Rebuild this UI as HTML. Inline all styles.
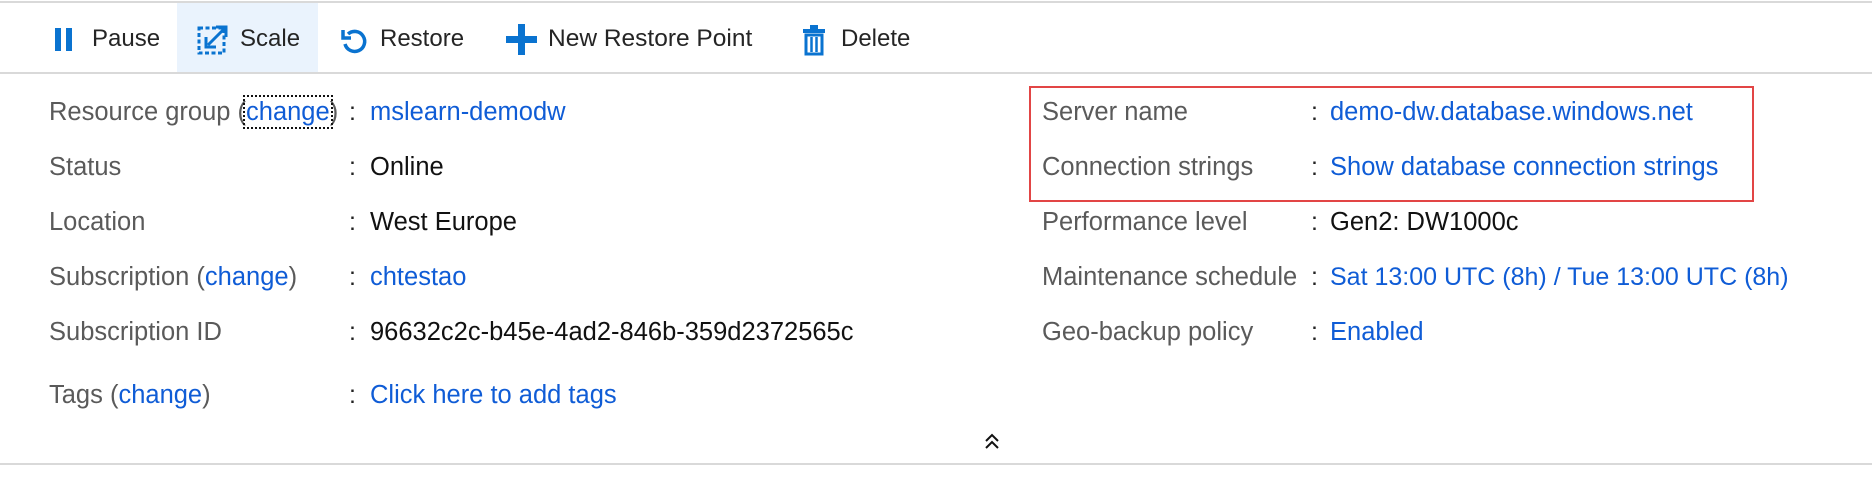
<!DOCTYPE html>
<html><head><meta charset="utf-8"><style>
body{margin:0;width:1872px;height:480px;background:#fff;font-family:"Segoe UI","Liberation Sans",sans-serif;position:relative;overflow:hidden}
.abs{position:absolute;white-space:nowrap}
.tb{font-size:24px;color:#252525;top:24px;line-height:30px}
.lbl{font-size:25.5px;color:#5a5a5a;line-height:30px}
.val{font-size:25.5px;color:#111;line-height:30px}
a{color:#0f5cd6;text-decoration:none}
.c{font-size:25px;color:#222;line-height:30px}
.foc{outline:2px dotted #111;outline-offset:1px}
</style></head><body>
<div class="abs" style="left:0;top:1px;width:1872px;height:2px;background:#d9d9d9"></div>
<div class="abs" style="left:177px;top:3px;width:141px;height:69px;background:#eaf3fd"></div>
<div class="abs" style="left:0;top:72px;width:1872px;height:2px;background:#d9d9d9"></div>

<div class="abs" style="left:55px;top:28px;width:6px;height:23px;background:#0a73d0"></div>
<div class="abs" style="left:66px;top:28px;width:6px;height:23px;background:#0a73d0"></div>
<div class="abs tb" style="left:92px">Pause</div>
<svg class="abs" style="left:196px;top:23px" width="34" height="34" viewBox="0 0 34 34"><rect x="3" y="5" width="25" height="25" fill="none" stroke="#0a73d0" stroke-width="3" stroke-dasharray="4 2.5"/><path d="M12 22 L29 5 M20 4 H30 V14" fill="none" stroke="#0a73d0" stroke-width="3"/><path d="M10 14 V24 H20" fill="none" stroke="#0a73d0" stroke-width="3"/></svg>
<div class="abs tb" style="left:240px">Scale</div>
<svg class="abs" style="left:340px;top:27px" width="28" height="28" viewBox="0 0 28 28"><path d="M8 7 A10 10 0 1 1 5 17" fill="none" stroke="#0a73d0" stroke-width="3.5"/><path d="M3 3 V11 H11" fill="none" stroke="#0a73d0" stroke-width="3.5"/></svg>
<div class="abs tb" style="left:380px">Restore</div>
<div class="abs" style="left:506px;top:36px;width:31px;height:7px;background:#0a73d0"></div>
<div class="abs" style="left:518px;top:24px;width:7px;height:31px;background:#0a73d0"></div>
<div class="abs tb" style="left:548px;font-size:24.5px">New Restore Point</div>
<svg class="abs" style="left:802px;top:24px" width="24" height="32" viewBox="0 0 24 32"><rect x="8" y="1" width="8" height="4" fill="#0a73d0"/><rect x="1" y="5" width="22" height="4" fill="#0a73d0"/><path d="M4 11 H20 V30 H4 Z" fill="none" stroke="#0a73d0" stroke-width="3"/><path d="M9.5 13 V28 M14.5 13 V28" stroke="#0a73d0" stroke-width="2.5"/></svg>
<div class="abs tb" style="left:841px">Delete</div>

<div class="abs lbl" style="left:49px;top:97px">Resource group (<a class="foc">change</a>)</div>
<div class="abs c" style="left:349px;top:97px">:</div>
<div class="abs val" style="left:370px;top:97px"><a>mslearn-demodw</a></div>

<div class="abs lbl" style="left:49px;top:152px">Status</div>
<div class="abs c" style="left:349px;top:152px">:</div>
<div class="abs val" style="left:370px;top:152px">Online</div>

<div class="abs lbl" style="left:49px;top:207px">Location</div>
<div class="abs c" style="left:349px;top:207px">:</div>
<div class="abs val" style="left:370px;top:207px">West Europe</div>

<div class="abs lbl" style="left:49px;top:262px">Subscription (<a>change</a>)</div>
<div class="abs c" style="left:349px;top:262px">:</div>
<div class="abs val" style="left:370px;top:262px"><a>chtestao</a></div>

<div class="abs lbl" style="left:49px;top:317px">Subscription ID</div>
<div class="abs c" style="left:349px;top:317px">:</div>
<div class="abs val" style="left:370px;top:317px">96632c2c-b45e-4ad2-846b-359d2372565c</div>

<div class="abs lbl" style="left:49px;top:380px">Tags (<a>change</a>)</div>
<div class="abs c" style="left:349px;top:380px">:</div>
<div class="abs val" style="left:370px;top:380px"><a>Click here to add tags</a></div>

<div class="abs" style="left:1029px;top:86px;width:725px;height:116px;border:2.5px solid #e24545;box-sizing:border-box"></div>
<div class="abs lbl" style="left:1042px;top:97px">Server name</div>
<div class="abs c" style="left:1311px;top:97px">:</div>
<div class="abs val" style="left:1330px;top:97px"><a>demo-dw.database.windows.net</a></div>

<div class="abs lbl" style="left:1042px;top:152px">Connection strings</div>
<div class="abs c" style="left:1311px;top:152px">:</div>
<div class="abs val" style="left:1330px;top:152px"><a>Show database connection strings</a></div>

<div class="abs lbl" style="left:1042px;top:207px">Performance level</div>
<div class="abs c" style="left:1311px;top:207px">:</div>
<div class="abs val" style="left:1330px;top:207px">Gen2: DW1000c</div>

<div class="abs lbl" style="left:1042px;top:262px">Maintenance schedule</div>
<div class="abs c" style="left:1311px;top:262px">:</div>
<div class="abs val" style="left:1330px;top:262px;font-size:25px"><a>Sat 13:00 UTC (8h) / Tue 13:00 UTC (8h)</a></div>

<div class="abs lbl" style="left:1042px;top:317px">Geo-backup policy</div>
<div class="abs c" style="left:1311px;top:317px">:</div>
<div class="abs val" style="left:1330px;top:317px"><a>Enabled</a></div>

<svg class="abs" style="left:984px;top:432px" width="16" height="18" viewBox="0 0 16 18"><path d="M2 9 L8 3 L14 9 M2 16 L8 10 L14 16" fill="none" stroke="#111" stroke-width="2"/></svg>
<div class="abs" style="left:0;top:463px;width:1872px;height:2px;background:#d9d9d9"></div>
</body></html>
